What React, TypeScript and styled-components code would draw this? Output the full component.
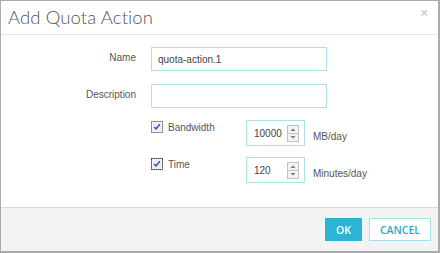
import React from "react";
import styled, { createGlobalStyle } from "styled-components";

const Global = createGlobalStyle`
  html, body { margin: 0; padding: 0; background: #fff; }
  * { box-sizing: border-box; }
`;

const Dialog = styled.div`
  width: 440px;
  height: 253px;
  border: 1px solid #ababab;
  border-right-width: 2px;
  border-bottom-width: 2px;
  display: flex;
  flex-direction: column;
  background: #fff;
  font-family: "Liberation Sans", Arial, sans-serif;
  color: #555;
`;

const Header = styled.div`
  height: 34px;
  border-bottom: 1px solid #e6e6e6;
  display: flex;
  align-items: center;
  justify-content: space-between;
  padding: 0 10px 0 7px;
  flex-shrink: 0;
`;

const Title = styled.h1`
  margin: 0;
  font-family: Lato, "Open Sans", sans-serif;
  font-weight: 300;
  font-size: 18.5px;
  color: #555;
  letter-spacing: 0.1px;
  line-height: 1;
  padding-bottom: 1px;
`;

const Close = styled.span`
  align-self: flex-start;
  margin-top: 4px;
  font-size: 13px;
  font-weight: bold;
  color: #cfcfcf;
  font-family: "Liberation Sans", Arial, sans-serif;
`;

const Body = styled.div`
  flex: 1;
  padding-top: 12px;
  display: flex;
  flex-direction: column;
`;

const Row = styled.div<{ $mb: number }>`
  display: grid;
  grid-template-columns: 135px 176px;
  column-gap: 15px;
  align-items: center;
  margin-bottom: ${(p) => p.$mb}px;
`;

const Label = styled.label`
  text-align: right;
  font-size: 10px;
  color: #555;
  margin-top: -4px;
`;

const TextInput = styled.div`
  height: 24px;
  border: 1px solid #ace0ea;
  font-size: 10px;
  color: #444;
  display: flex;
  align-items: center;
  padding-left: 6px;
`;

const OptionRow = styled.div<{ $mb: number }>`
  display: flex;
  align-items: flex-start;
  padding-left: 150px;
  margin-bottom: ${(p) => p.$mb}px;
`;

const CheckLabel = styled.div`
  width: 95px;
  display: flex;
  align-items: center;
  gap: 5px;
  font-size: 10px;
  color: #555;
  margin-top: 1px;
`;

const Box = styled.span<{ $focus?: boolean }>`
  width: 12px;
  height: 12px;
  display: inline-flex;
  outline: ${(p) => (p.$focus ? "1px dotted #444" : "none")};
  outline-offset: -1px;
`;

const Spinner = styled.div`
  width: 59px;
  height: 26px;
  border: 1px solid #ace0ea;
  display: flex;
  align-items: center;
  justify-content: space-between;
  padding: 0 5px 0 7px;
  font-size: 10px;
  color: #444;
`;

const Unit = styled.span`
  font-size: 10px;
  color: #555;
  margin-left: 8px;
  margin-top: 11px;
`;

const Footer = styled.div`
  height: 44px;
  border-top: 1px solid #dcdcdc;
  background: #f3f3f3;
  display: flex;
  align-items: center;
  justify-content: flex-end;
  gap: 7px;
  padding-right: 7px;
  flex-shrink: 0;
`;

const Button = styled.button<{ $primary?: boolean }>`
  height: 23px;
  padding: 0 10px;
  border: 1px solid ${(p) => (p.$primary ? "#2bb4d4" : "#a8dfeb")};
  background: ${(p) => (p.$primary ? "#2bb4d4" : "#fff")};
  color: ${(p) => (p.$primary ? "#fff" : "#2aa9c9")};
  font-family: "Open Sans", sans-serif;
  font-weight: 600;
  font-size: 10.5px;
  cursor: pointer;
  min-width: ${(p) => (p.$primary ? 35 : 62)}px;
`;

const Check = ({ focus }: { focus?: boolean }) => (
  <Box $focus={focus}>
    <svg width="12" height="12" viewBox="0 0 12 12">
      <rect x="0.5" y="0.5" width="11" height="11" fill="#fff" stroke="#8e8f8f" />
      <rect x="1.5" y="1.5" width="9" height="9" fill="#e9ecf2" />
      <path d="M3.2 6 L5 8 L8.8 3.2" fill="none" stroke="#2f4fa8" strokeWidth="1.4" />
    </svg>
  </Box>
);

const SpinArrows = () => (
  <svg width="12" height="17" viewBox="0 0 12 17">
    <rect x="0.5" y="0.5" width="11" height="16" fill="#f4f4f4" stroke="#c2c2c2" />
    <line x1="1" y1="8.5" x2="11" y2="8.5" stroke="#c2c2c2" />
    <path d="M3.5 6 L6 3.5 L8.5 6 Z" fill="#777" />
    <path d="M3.5 11 L6 13.5 L8.5 11 Z" fill="#777" />
  </svg>
);

export default function App() {
  return (
    <>
      <Global />
      <Dialog>
        <Header>
          <Title>Add Quota Action</Title>
          <Close>×</Close>
        </Header>
        <Body>
          <Row $mb={13}>
            <Label>Name</Label>
            <TextInput>quota-action.1</TextInput>
          </Row>
          <Row $mb={12}>
            <Label>Description</Label>
            <TextInput />
          </Row>
          <OptionRow $mb={11}>
            <CheckLabel>
              <Check />
              Bandwidth
            </CheckLabel>
            <Spinner>
              10000
              <SpinArrows />
            </Spinner>
            <Unit>MB/day</Unit>
          </OptionRow>
          <OptionRow $mb={0}>
            <CheckLabel>
              <Check focus />
              Time
            </CheckLabel>
            <Spinner>
              120
              <SpinArrows />
            </Spinner>
            <Unit>Minutes/day</Unit>
          </OptionRow>
        </Body>
        <Footer>
          <Button $primary>OK</Button>
          <Button>CANCEL</Button>
        </Footer>
      </Dialog>
    </>
  );
}
